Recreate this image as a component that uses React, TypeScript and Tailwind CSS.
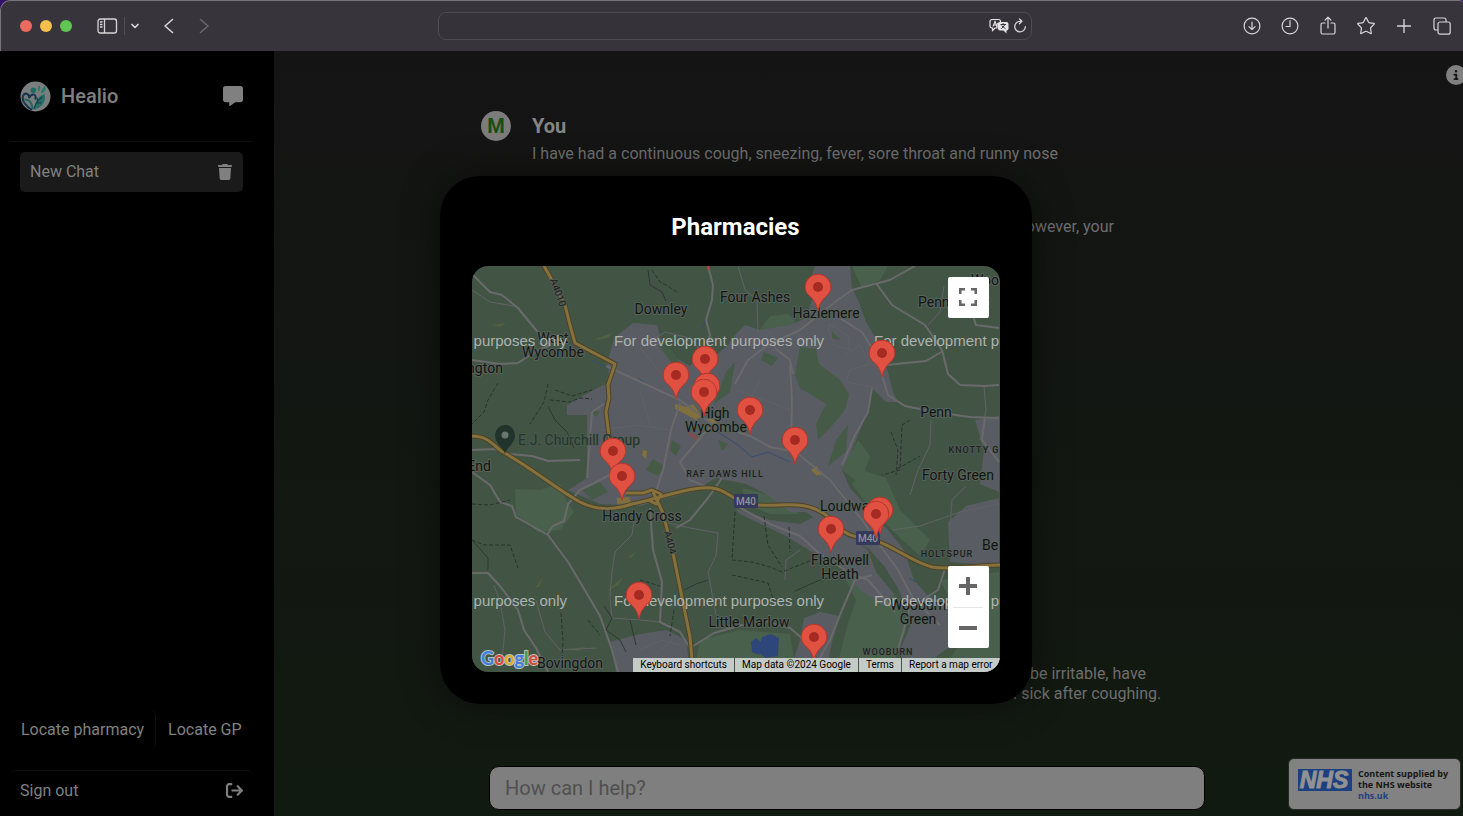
import React from "react";
import { ChevronDown, Plus, Star } from "lucide-react";
import {
  FaArrowRightFromBracket,
  FaCircleInfo,
  FaMessage,
  FaTrash,
} from "react-icons/fa6";

const PINS: [number, number][] = [
  [708, 246], [818, 287], [882, 353], [705, 359], [676, 375], [707, 386],
  [704, 392], [750, 410], [795, 440], [613, 451], [622, 476], [880, 510],
  [876, 514], [831, 529], [639, 595], [814, 637],
];

const PLACES: [number, number, string][] = [
  [661, 314, "Downley"],
  [755, 302, "Four Ashes"],
  [826, 318, "Hazlemere"],
  [553, 343, "West"],
  [553, 357, "Wycombe"],
  [485, 373, "ngton"],
  [715, 418, "High"],
  [716, 432, "Wycombe"],
  [936, 417, "Penn"],
  [954, 307, "Penn Street"],
  [985, 285, "Woo"],
  [958, 480, "Forty Green"],
  [479, 471, "End"],
  [642, 521, "Handy Cross"],
  [853, 511, "Loudwater"],
  [840, 565, "Flackwell"],
  [840, 579, "Heath"],
  [749, 627, "Little Marlow"],
  [918, 610, "Wooburn"],
  [918, 624, "Green"],
  [570, 668, "Bovingdon"],
  [990, 550, "Be"],
];

const AREAS: [number, number, string][] = [
  [725, 477, "RAF DAWS HILL"],
  [974, 453, "KNOTTY G"],
  [947, 557, "HOLTSPUR"],
  [888, 655, "WOOBURN"],
];

const URBAN = [
  "M633 323L657 325L662 345L676 358L690 366L700 354L716 355L728 345L735 335L745 325L760 330L790 325L806 318L812 300L810 280L815 266L850 266L852 288L858 300L866 322L878 342L888 372L893 392L898 402L886 402L872 388L868 412L858 435L850 455L842 470L850 488L866 506L888 530L904 550L914 580L928 596L952 606L975 620L960 640L938 655L925 672L905 672L900 650L912 622L898 588L884 566L868 548L850 540L828 528L806 512L790 512L766 494L746 484L716 478L692 492L660 500L640 506L600 504L568 490L587 478L587 415L567 415L567 405L597 388L610 382L607 362L615 337Z",
  "M735 508L770 520L800 524L820 514L840 530L868 550L876 572L894 594L884 606L860 590L836 562L812 552L786 536L740 514Z",
  "M610 642L640 634L666 630L686 640L690 672L616 672Z",
  "M948 522L966 506L999 498V566L950 562Z",
  "M975 420L999 416V492L980 484L984 450Z",
  "M804 618L820 612L840 616L832 642L826 672H790L800 640Z",
];

const LIGHT_GREEN = [
  "M515 489L540 490L560 484L566 500L574 512L560 530L538 532L516 514Z",
  "M758 332L770 316L788 314L796 322L778 333Z",
  "M852 266H888L880 280L862 288Z",
  "M742 488L774 496L800 514L770 514L746 504Z",
  "M838 548L866 566L900 600L906 630L890 672H836L846 630L856 600L846 580Z",
  "M700 640L740 630L790 634L796 672H694Z",
  "M940 580L999 572V672H940L966 636L952 604Z",
  "M862 470L886 478L900 510L930 540L920 556L892 530L868 506L852 484Z",
  "M842 470L858 440L870 456L860 484Z",
];

const PARKS = [
  "M800 347L816 349L819 364L840 380L849 394L845 410L830 428L818 440L816 424L826 404L800 388L795 375Z",
  "M764 352L778 358L772 366L761 360Z",
  "M832 331L840 340L832 338Z",
  "M658 345L672 350L682 366L674 366Z",
  "M726 372L735 362L730 392L714 404Z",
  "M672 440L681 446L676 456L670 450Z",
  "M653 459L664 466L658 476L646 470Z",
  "M718 440L728 444L722 451Z",
  "M590 410L600 412L596 417Z",
  "M836 440L848 425L846 452L828 466Z",
  "M582 490L600 482L608 492L592 500Z",
];

const ROADS = [
  "M472 274L490 292L502 295L518 308L536 330L550 345L535 352L518 363L500 364L472 360",
  "M606 366L680 400L712 424L750 436L770 447L796 452L830 480L862 520L882 548L898 570L914 600L940 625",
  "M708 266L713 285L712 300L706 320L710 335L705 360",
  "M735 384L748 360L768 345L800 330L835 302L852 290L890 280L915 266",
  "M876 283L892 305L925 325L942 350L948 374L960 385L984 386L999 385",
  "M840 318L862 332L876 355L888 395L905 406L935 412L970 417L999 418",
  "M886 365L926 361L943 351",
  "M872 388L868 412L855 435L842 465",
  "M790 365L792 400L791 440",
  "M775 348L790 360L793 374",
  "M680 403L671 430L663 470L655 495",
  "M587 478L592 412L604 404",
  "M472 472L490 485L500 502L512 506L516 517L548 535L568 562L580 582L600 616L612 650L618 672",
  "M547 535L553 526L564 521L568 504L580 490L600 480L628 465",
  "M472 573L488 573L500 586L518 610L524 630L536 648L548 672",
  "M650 508L653 550L662 582L660 622L680 632L690 648",
  "M690 648L714 633L760 620L790 628L810 645",
  "M735 505L770 524L800 536L820 554L848 572L868 580L882 596L895 612",
  "M812 672L830 640L842 610L855 580L872 575",
  "M946 566L938 590L910 608L898 650",
  "M722 478L708 498L690 520L676 528",
  "M952 286L968 300L976 325L999 328",
  "M985 418L982 440L999 462",
  "M712 424L680 462L690 480L710 488",
  "M472 450L495 449L510 454L532 456L548 461L580 460",
];

const LANES = [
  "M472 290L490 302L514 306",
  "M634 522L632 535L615 552L612 572L610 596L612 618L640 620L660 622",
  "M664 522L690 528L718 533L716 556L708 572L716 615",
  "M494 585L500 602L505 630L502 660",
  "M536 600L545 632L560 650L596 648",
  "M640 350L665 332L690 338L705 356",
  "M640 348L660 372L690 400",
  "M845 355L860 345L870 364L850 370L846 382L878 388",
  "M830 324L848 336L850 350L834 345L828 330Z",
  "M931 420L930 445L918 470L910 495",
  "M928 325L940 312L944 286",
  "M984 386L986 410L980 440",
  "M785 580L786 560L800 550",
  "M892 530L920 526L960 512L999 504",
  "M950 530L952 500L966 486",
  "M640 650L662 640L680 645M650 660L672 640",
  "M738 266L745 290L757 300L758 332",
  "M600 430L640 425L668 430M640 390L650 425",
  "M736 390L770 402L790 410M740 420L760 380",
];

const PATHS = [
  "M652 270L660 282L668 286L678 293",
  "M498 383L488 400L484 412L472 424",
  "M548 384L544 402L530 424",
  "M550 400L570 402L580 398L592 399",
  "M555 390L572 396L592 390",
  "M472 504L490 505L510 500M472 540L484 545L510 545L518 568",
  "M561 613L563 640L562 660",
  "M735 512L732 560L752 562L770 567L782 572L812 560",
  "M764 516L768 545L782 567M789 527L790 552",
  "M732 575L746 578L768 583L774 602",
  "M910 420L902 425L900 470L882 475",
  "M891 432L898 450L896 475M897 469L920 456",
  "M674 610L670 636M640 580L660 586",
  "M588 620L600 635",
];

const TRACKS = [
  "M648 270L650 285L662 292L666 301",
  "M548 406L555 420L567 432L574 448",
  "M604 606L612 618L606 630L620 640L626 652",
  "M684 590L696 584L708 580",
  "M472 540L488 558L488 570",
  "M795 591L820 580L835 576",
  "M630 620L636 645",
];

const MAIN_ROADS = [
  "M544 266L553 282L565 305L570 325L575 343L615 364L608 385L609 398L606 412L609 436L612 460",
  "M472 436C490 436 495 448 503 452C535 470 555 488 580 502C600 512 617 509 632 504C665 497 690 486 712 488C730 490 735 505 758 505C780 506 790 503 805 506C835 512 835 534 858 537C890 540 905 560 932 567C950 570 970 566 1000 565",
  "M653 492L663 513L673 553L690 637L693 672M626 493L643 493L652 490L661 494L656 504L648 500",
];

function Pin({ x, y }: { x: number; y: number }) {
  return (
    <g transform={`translate(${x} ${y})`}>
      <path
        d="M0 24C-1.500 17-4 13-8 9.500C-11.500 6.500-12.800 3.500-12.800 0A12.800 12.800 0 0 1 12.800 0C12.800 3.500 11.500 6.500 8 9.500C4 13 1.500 17 0 24Z"
        fill="#e05142"
        stroke="#b8352a"
        strokeWidth="1"
      />
      <circle r="5" fill="#a52a21" />
    </g>
  );
}

function MapCanvas() {
  return (
    <svg
      viewBox="472 266 528 406"
      className="block h-auto w-full"
      role="img"
      aria-label="Map of pharmacies"
      fontFamily="Roboto, sans-serif"
    >
      <rect x="472" y="266" width="528" height="406" fill="#425545" />
      <g fill="#49614c">
        {LIGHT_GREEN.map((d) => <path key={d} d={d} />)}
      </g>
      <g fill="#595c62">
        {URBAN.map((d) => <path key={d} d={d} />)}
      </g>
      <g fill="#455b48">
        {PARKS.map((d) => <path key={d} d={d} />)}
      </g>
      <g fill="#5b6740" opacity=".6">
        <path d="M492 325l14-2-6 4zM598 338l14-5-4 5-14 2zM608 590l16-14-6 9-10 6zM535 588l8-11-4 10zM628 558l8-7-4 6zM566 649l20-2-8 4zM714 564l6-4zM496 406l8-5z" />
      </g>
      <g fill="#80703d">
        <path d="M675 404l12 3 6-3 9 12-6 4-9-5-12-6zM706 420l7-2 5 6-8-1zM643 450l4 1-1 8-4-4zM617 498l12-1 2 6-14 1zM811 470l6-4 3 7-3 3zM815 470l7 2-2 4z" />
      </g>
      <path d="M690 432l8 6-2 2-8-6z" fill="#8b4a48" />
      <g fill="#2e4679">
        <path d="M751 642l5-4 6 5-3 12-7-3zM762 637l9-3 8 4-1 18-12 2-8-6z" />
      </g>
      <g fill="none" stroke="#354a78" strokeWidth="1" opacity=".8">
        <path d="M592 360L606 368L620 372M716 431L738 445L752 457L768 452L790 462M638 378L644 382M909 578L916 582M706 318L702 330" />
      </g>
      <g fill="none" stroke="#616266" strokeWidth="1" strokeLinejoin="round">
        {LANES.map((d) => <path key={d} d={d} />)}
      </g>
      <g fill="none" stroke="#6a696b" strokeWidth="2" strokeLinejoin="round">
        {ROADS.map((d) => <path key={d} d={d} />)}
      </g>
      <g fill="none" stroke="#27352b" strokeWidth="1" strokeDasharray="4 2">
        {PATHS.map((d) => <path key={d} d={d} />)}
      </g>
      <g fill="none" stroke="#2b3a2f" strokeWidth="1">
        {TRACKS.map((d) => <path key={d} d={d} />)}
      </g>
      <g fill="none" strokeLinejoin="round" stroke="#4c4329" strokeWidth="5">
        {MAIN_ROADS.map((d) => <path key={d} d={d} />)}
      </g>
      <g fill="none" strokeLinejoin="round" stroke="#86703b" strokeWidth="3">
        {MAIN_ROADS.map((d) => <path key={d} d={d} />)}
      </g>
      <g fill="#1c1d1e" stroke="#505a53" strokeWidth="2" paintOrder="stroke" fontSize="10">
        <text transform="translate(550 280) rotate(70)">A4010</text>
        <text transform="translate(664 532) rotate(76)">A404</text>
      </g>
      {[[746, 501], [868, 538]].map(([x, y]) => (
        <g key={x}>
          <rect x={x - 12} y={y - 7} width="24" height="14" rx="1" fill="#353a5c" />
          <text x={x} y={y + 4} fill="#929399" fontSize="10" fontWeight="500" textAnchor="middle">
            M40
          </text>
        </g>
      ))}
      <g
        fill="#131414"
        stroke="#56625a"
        strokeWidth="2"
        strokeLinejoin="round"
        paintOrder="stroke"
        fontSize="14"
        textAnchor="middle"
      >
        {PLACES.map(([x, y, name]) => (
          <text key={`${name}${x}`} x={x} y={y}>{name}</text>
        ))}
      </g>
      <g
        fill="#1e2020"
        stroke="#56605a"
        strokeWidth="1"
        paintOrder="stroke"
        fontSize="9"
        fontWeight="500"
        letterSpacing="1"
        textAnchor="middle"
      >
        {AREAS.map(([x, y, name]) => (
          <text key={name} x={x} y={y}>{name}</text>
        ))}
      </g>
      <g>
        <path d="M505 454C504 448 495 444 495 435A10 10 0 0 1 515 435C515 444 506 448 505 454Z" fill="#21332a" />
        <circle cx="505" cy="435" r="3.500" fill="#69766d" />
        <text x="518" y="445" fill="#24342c" stroke="#4b5c50" strokeWidth="1" paintOrder="stroke" fontSize="14">
          E.J. Churchill Group
        </text>
      </g>
      <g fill="#aeb2ae" fontFamily="Liberation Sans, Arial, sans-serif" fontSize="15">
        {[346, 606].map((y) => (
          <g key={y}>
            <text x="567" y={y} textAnchor="end">For development purposes only</text>
            <text x="614" y={y}>For development purposes only</text>
            <text x="874" y={y}>For development purposes only</text>
          </g>
        ))}
      </g>
      {PINS.map(([x, y]) => <Pin key={`${x}-${y}`} x={x} y={y} />)}
      <g
        fontFamily="Lato, sans-serif"
        fontSize="18"
        fontWeight="700"
        stroke="#b9c1bc"
        strokeWidth="2"
        paintOrder="stroke"
      >
        <text x="481" y="665">
          <tspan fill="#3f7de0">G</tspan>
          <tspan fill="#d94a3d">o</tspan>
          <tspan fill="#e0ac2c">o</tspan>
          <tspan fill="#3f7de0">g</tspan>
          <tspan fill="#36984e">l</tspan>
          <tspan fill="#d94a3d">e</tspan>
        </text>
      </g>
    </svg>
  );
}

function PharmacyMap() {
  return (
    <div className="relative overflow-hidden rounded-2xl">
      <MapCanvas />
      <button
        aria-label="Toggle fullscreen view"
        className="absolute right-[11px] top-[11px] flex size-[41px] items-center justify-center rounded-[2px] bg-white"
      >
        <svg width="18" height="18" viewBox="0 0 18 18" fill="#666">
          <path d="M0 0v6h2.500V2.500H6V0H0zm18 0h-6v2.500h3.500V6H18V0zm0 18v-6h-2.500v3.500H12V18h6zM2.500 12H0v6h6v-2.500H2.500V12z" />
        </svg>
      </button>
      <div className="absolute bottom-6 right-[11px] flex w-[41px] flex-col items-center rounded-[2px] bg-white">
        <button aria-label="Zoom in" className="flex h-[41px] w-full items-center justify-center">
          <svg width="18" height="18" viewBox="0 0 18 18" fill="#666">
            <path d="M7 0h4v7h7v4h-7v7H7v-7H0V7h7z" />
          </svg>
        </button>
        <span className="h-px w-[30px] bg-[#e6e6e6]" />
        <button aria-label="Zoom out" className="flex h-10 w-full items-center justify-center">
          <svg width="18" height="18" viewBox="0 0 18 18" fill="#666">
            <path d="M0 7h18v4H0z" />
          </svg>
        </button>
      </div>
      <div className="absolute bottom-0 right-0 flex h-[14px] items-center whitespace-nowrap bg-[#c5cbc7] text-[10px] leading-[14px] text-black">
        <button className="px-[7px]">Keyboard shortcuts</button>
        <span className="border-l border-[#425545] px-[7px]">Map data ©2024 Google</span>
        <a href="#terms" className="border-l border-[#425545] px-[7px]">Terms</a>
        <a href="#report" className="border-l border-[#425545] px-[7px]">Report a map error</a>
      </div>
    </div>
  );
}

function BrowserBar() {
  return (
    <div className="bg-[#34106b]">
      <div className="grid h-[51px] grid-cols-[1fr_594px_1fr] items-center rounded-tl-[10px] rounded-tr-[4px] border-l border-t border-[#77757b] bg-[#37353b] pl-[6px] text-[#d6d5d8]">
        <div className="flex items-center">
          <div className="ml-[13px] flex gap-2">
            <button aria-label="Close" className="size-3 rounded-full bg-[#ed6a5f]" />
            <button aria-label="Minimise" className="size-3 rounded-full bg-[#f5bf4f]" />
            <button aria-label="Zoom window" className="size-3 rounded-full bg-[#61c554]" />
          </div>
          <button aria-label="Toggle sidebar" className="ml-6">
            <svg width="22" height="16" viewBox="0 0 22 16" fill="none" stroke="currentColor" strokeWidth="1.300">
              <rect x="2" y="1" width="18.500" height="14" rx="2.200" />
              <path d="M8.500 1v14M4 4h2.500M4 6.500h2.500M4 9h2.500" />
            </svg>
          </button>
          <span className="ml-[6px] h-[18px] w-px bg-[#514f55]" />
          <button aria-label="Tab groups" className="ml-1">
            <ChevronDown size={12} strokeWidth={3.5} />
          </button>
          <button aria-label="Back" className="ml-[19px]">
            <svg width="18" height="18" viewBox="0 0 18 18" fill="none" stroke="currentColor" strokeWidth="1.600" strokeLinecap="round" strokeLinejoin="round">
              <path d="M12.500 2.500L5 9l7.500 6.500" />
            </svg>
          </button>
          <button aria-label="Forward" className="ml-[17px] text-[#69676d]">
            <svg width="18" height="18" viewBox="0 0 18 18" fill="none" stroke="currentColor" strokeWidth="1.600" strokeLinecap="round" strokeLinejoin="round">
              <path d="M5.500 2.500L13 9l-7.500 6.500" />
            </svg>
          </button>
        </div>
        <div className="flex h-7 items-center gap-1 rounded-lg border border-[#4e4c52] bg-[#353339] pr-1">
          <input aria-label="Address" className="min-w-0 flex-1 bg-transparent outline-none" />
          <button aria-label="Translate">
            <svg width="20" height="16" viewBox="0 0 20 16">
              <path d="M3 1.500h6.500a2 2 0 0 1 2 2V5H10a2 2 0 0 0-2 2v3H6l-2.500 2.500V10H3a2 2 0 0 1-2-2V3.500a2 2 0 0 1 2-2z" fill="none" stroke="#e4e4e6" strokeWidth="1.200" />
              <path d="M4 8.500L6 3.500l2 5M4.600 7h2.800" fill="none" stroke="#e4e4e6" strokeWidth="1.100" />
              <rect x="9" y="4" width="10.500" height="8.500" rx="2" fill="#e4e4e6" />
              <path d="M14 12l3.500 3.500V12z" fill="#e4e4e6" />
              <path d="M11.500 6.500h5.500M14.200 5.200v1.300M12.300 10.800l3.700-4.100M12.500 7.600l4 3.200" fill="none" stroke="#37353b" strokeWidth="1" />
            </svg>
          </button>
          <button aria-label="Reload">
            <svg width="14" height="16" viewBox="0 0 14 16" fill="none" stroke="currentColor" strokeWidth="1.300" strokeLinecap="round" strokeLinejoin="round">
              <path d="M8.500 3.300H7a5.300 5.300 0 1 0 5.300 5.400M6.500 1l2.400 2.300L6.500 5.700" />
            </svg>
          </button>
        </div>
        <div className="flex items-center justify-end pr-[2px]">
          <button aria-label="Downloads" className="flex w-[38px] justify-center">
            <svg width="18" height="18" viewBox="0 0 18 18" fill="none" stroke="currentColor" strokeWidth="1.200" strokeLinecap="round" strokeLinejoin="round">
              <circle cx="9" cy="9" r="7.900" />
              <path d="M9 5v7.500M6 9.700l3 3 3-3" />
            </svg>
          </button>
          <button aria-label="History" className="flex w-[38px] justify-center">
            <svg width="18" height="18" viewBox="0 0 18 18" fill="none" stroke="currentColor" strokeWidth="1.200" strokeLinecap="round">
              <circle cx="9" cy="9" r="7.900" />
              <path d="M9 3.500V9.500H5" />
            </svg>
          </button>
          <button aria-label="Share" className="flex w-[38px] justify-center">
            <svg width="18" height="20" viewBox="0 0 18 20" fill="none" stroke="currentColor" strokeWidth="1.200" strokeLinecap="round" strokeLinejoin="round">
              <path d="M6 7H3.500Q2 7 2 8.500v8Q2 18 3.500 18h11q1.500 0 1.500-1.500v-8Q16 7 14.500 7H12M9 12V1.500M6 4.200l3-3 3 3" />
            </svg>
          </button>
          <button aria-label="Bookmark" className="flex w-[38px] justify-center">
            <Star size={20} strokeWidth={1.5} strokeLinejoin="miter" />
          </button>
          <button aria-label="New tab" className="flex w-[38px] justify-center">
            <Plus size={22} strokeWidth={1.5} />
          </button>
          <button aria-label="Tab overview" className="flex w-[38px] justify-center">
            <svg width="18" height="18" viewBox="0 0 18 18" fill="none" stroke="currentColor" strokeWidth="1.200">
              <path d="M5 13H3Q1 13 1 11V3q0-2 2-2h8q2 0 2 2v2" />
              <rect x="5" y="5" width="12.200" height="12.200" rx="2" />
            </svg>
          </button>
        </div>
      </div>
    </div>
  );
}

function Logo() {
  return (
    <svg width="31" height="31" viewBox="0 0 31 31" aria-hidden="true">
      <circle cx="15.500" cy="15.500" r="15" fill="#7b7e7e" />
      <circle cx="13.300" cy="9.300" r="2.800" fill="#226a62" />
      <path d="M18.500 10.500Q16.500 7 19.500 4Q21.500 8 18.500 10.500ZM21 12.500Q20.500 7.500 25.500 5Q26.500 10.500 21 12.500Z" fill="#2a7a68" />
      <path d="M15 28.500Q14 17 24.500 12.500Q27 24 15 28.500Z" fill="#246f64" />
      <path d="M12 29C6 25 1.500 20 3 15C4.500 11 9.500 12.500 9 17C12 11 17.500 13.500 15 18.500" fill="none" stroke="#17344f" strokeWidth="2" />
      <path d="M4.500 18.500Q11 18 13 28" fill="none" stroke="#22655f" strokeWidth="2" />
      <path d="M14 28Q16 20 22.500 16M16.500 22l5 0M17.500 19.500l-.5-3" fill="none" stroke="#173d50" strokeWidth="1.200" />
    </svg>
  );
}

function Sidebar() {
  return (
    <aside className="relative flex w-[274px] shrink-0 flex-col bg-black pl-[10px] pr-[21px] text-base text-[#808080]">
      <div className="flex h-[91px] items-center border-b border-[#0e0e0e] px-[10px]">
        <Logo />
        <h1 className="ml-[10px] text-xl font-medium">Healio</h1>
        <button aria-label="Start chat" className="ml-auto">
          <FaMessage size={20} />
        </button>
      </div>
      <div className="ml-[10px] mr-[10px] mt-[10px] flex h-10 items-center justify-between rounded-[5px] bg-[#1a1a1a] px-[10px]">
        <button>New Chat</button>
        <button aria-label="Delete chat">
          <FaTrash size={16} />
        </button>
      </div>
      <nav className="mt-auto flex flex-col">
        <div className="mb-5 flex h-10 items-center pl-[11px]">
          <button className="h-full rounded-r-md border-r border-[#101010] pr-[11px]">Locate pharmacy</button>
          <button className="pl-[12px]">Locate GP</button>
        </div>
        <button className="mb-[6px] flex h-10 items-center justify-between rounded-t-md border-t border-[#101010] px-[10px]">
          Sign out
          <FaArrowRightFromBracket size={17} />
        </button>
      </nav>
      <button
        aria-label="Collapse sidebar"
        className="absolute left-full top-[409px] flex h-[50px] w-5 items-center rounded-r-[20px] bg-[#101310]"
      >
        <svg width="10" height="16" viewBox="0 0 10 16" fill="none" stroke="#7c7e7c" strokeWidth="2">
          <path d="M8.500 1.500L2 8l6.500 6.500" />
        </svg>
      </button>
    </aside>
  );
}

function Chat() {
  return (
    <main className="relative flex min-w-0 flex-1 flex-col bg-gradient-to-b from-[#141414] to-[#111a10] text-base text-[#6e6e6e]">
      <button aria-label="Information" className="absolute -right-[3px] top-[14px] text-[#808080]">
        <FaCircleInfo size={20} />
      </button>
      <div className="flex flex-1 flex-col pl-[207px] pt-[60px]">
        <div className="flex gap-[21px]">
          <span className="flex size-[30px] items-center justify-center rounded-full bg-[#7c7c7c] text-xl font-bold text-[#174f18]">
            M
          </span>
          <div>
            <h2 className="text-xl font-bold leading-[30px] text-[#858585]">You</h2>
            <p className="leading-[26px]">
              I have had a continuous cough, sneezing, fever, sore throat and runny nose
            </p>
          </div>
        </div>
        <p className="mt-[50px] pl-[536px] leading-5">however, your</p>
        <div className="mb-[54px] mt-auto leading-5">
          <p className="pl-[549px]">be irritable, have</p>
          <p className="pl-[532px]">. sick after coughing.</p>
        </div>
      </div>
      <div className="flex items-end pb-[6px] pl-[215px] pr-[2px]">
        <input
          aria-label="Message"
          placeholder="How can I help?"
          className="h-11 min-w-0 flex-1 rounded-[10px] border border-black bg-[#7f7f7f] px-[15px] text-xl outline-none placeholder:text-[#505050]"
        />
        <a
          href="#nhs"
          className="ml-[83px] flex h-[52px] w-[173px] items-center gap-[6px] rounded-md border border-[#252b24] bg-[#828282] px-[9px]"
        >
          <svg width="54" height="22" viewBox="0 0 54 22" className="mb-2 shrink-0">
            <rect width="54" height="22" fill="#1d4080" />
            <text
              x="26"
              y="19"
              fill="#929292"
              stroke="#929292"
              strokeWidth="1"
              fontFamily="Liberation Sans, Arial, sans-serif"
              fontSize="23"
              fontWeight="700"
              fontStyle="italic"
              textAnchor="middle"
            >
              NHS
            </text>
          </svg>
          <span className="whitespace-nowrap font-['Open_Sans',sans-serif] text-[9px] font-bold leading-[11px] text-[#161616]">
            Content supplied by
            <br />
            the NHS website
            <br />
            <span className="text-[#1d4080]">nhs.uk</span>
          </span>
        </a>
      </div>
    </main>
  );
}

export default function App() {
  return (
    <div className="flex min-h-screen flex-col bg-black font-[Roboto,sans-serif]">
      <BrowserBar />
      <div className="relative flex flex-1 overflow-hidden">
        <Sidebar />
        <Chat />
        <div className="absolute inset-0 flex items-center justify-center pb-1 pl-2 pt-4">
          <section
            role="dialog"
            aria-labelledby="dialog-title"
            className="w-[592px] max-w-full rounded-[40px] bg-black p-8 shadow-[0_0_40px_rgba(0,0,0,0.4)]"
          >
            <h2 id="dialog-title" className="mb-5 text-center text-2xl font-bold leading-[38px] text-white">
              Pharmacies
            </h2>
            <PharmacyMap />
          </section>
        </div>
      </div>
    </div>
  );
}
